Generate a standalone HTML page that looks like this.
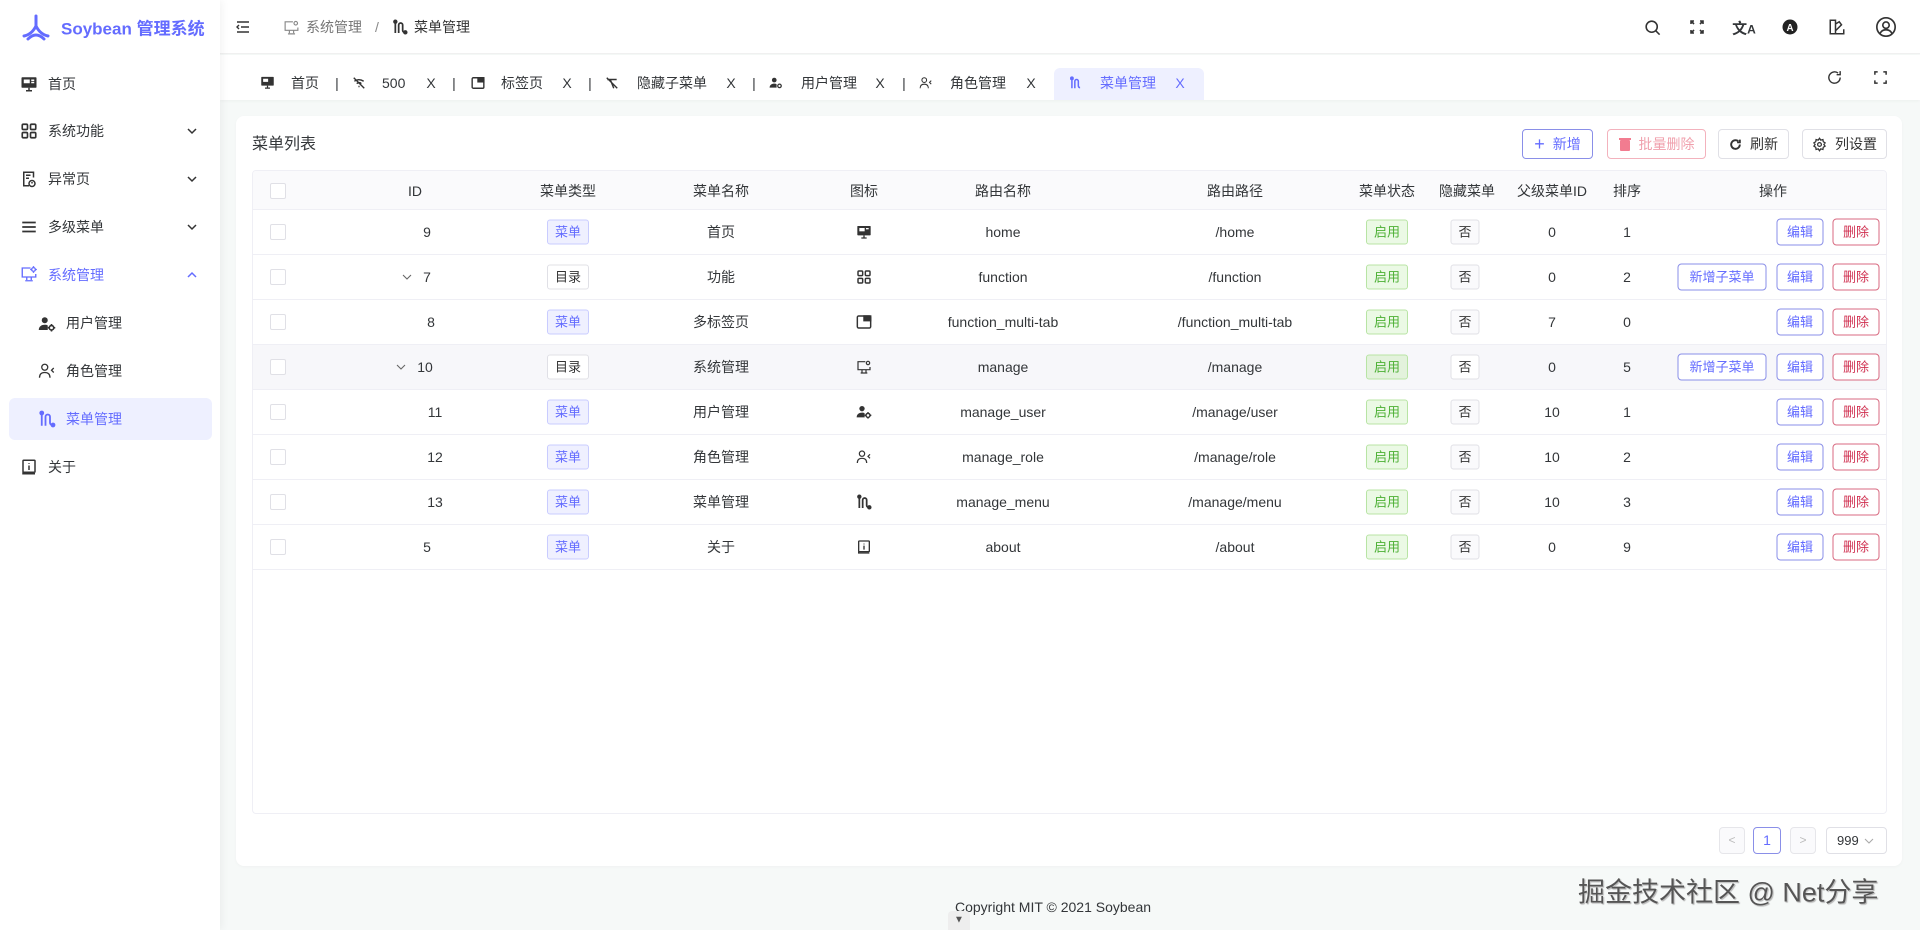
<!DOCTYPE html>
<html><head><meta charset="utf-8">
<style>
*{margin:0;padding:0;box-sizing:border-box}
body{width:1920px;height:930px;overflow:hidden;font-family:"Liberation Sans","Noto Sans CJK SC",sans-serif;font-size:14px;color:#333639;background:#f6f9f8;position:relative}
.abs{position:absolute}
.c{position:absolute;transform:translate(-50%,-50%);white-space:nowrap}
.cy{position:absolute;transform:translateY(-50%);white-space:nowrap}
svg{display:block}
#side{left:0;top:0;width:220px;height:930px;background:#fff;box-shadow:2px 0 8px rgba(0,0,0,.05);z-index:3}
#head{left:220px;top:0;width:1700px;height:54px;background:#fff;border-bottom:1px solid #f0f0f0}
#tabs{left:220px;top:55px;width:1700px;height:45px;background:#fff;box-shadow:0 1px 3px rgba(0,0,0,.04)}
.card{left:236px;top:116px;width:1666px;height:750px;background:#fff;border-radius:8px;box-shadow:0 1px 3px rgba(0,0,0,.03)}
.tbl{left:252px;top:170px;width:1635px;height:644px;border:1px solid #efeff5;border-radius:4px;overflow:hidden}
.hdr{left:0;top:0;width:100%;height:39px;background:#fafafc;border-bottom:1px solid #efeff5}
.row{left:0;width:100%;height:45px;border-bottom:1px solid #efeff5}
.cb{width:16px;height:16px;border:1px solid #e0e0e6;border-radius:2px;background:#fff}
.tag{height:25px;line-height:23px;padding:0 7px;border-radius:3px;font-size:13px;border:1px solid}
.tm{background:#eff0ff;border-color:#c9ccff;color:#646cff}
.td{background:#fff;border-color:#e0e0e6;color:#333}
.tg{background:#ebf9e5;border-color:#b8e4a4;color:#4cb034}
.tn{background:#fafafc;border-color:#e0e0e6;color:#333}
.btn{height:27px;line-height:25px;border:1px solid;border-radius:4px;font-size:13px;text-align:center;background:#fff}
.be{border-color:#8a8fe8;color:#646cff;width:47px}
.bd{border-color:#d86a80;color:#d03050;width:47px}
.ba{border-color:#8a8fe8;color:#646cff;width:89px}
.tb{height:30px;line-height:28px;border:1px solid;border-radius:4px;font-size:14px;display:flex;align-items:center;justify-content:center;gap:8px}
.mi{font-size:14px;color:#333639}
</style></head><body>

<div id="side" class="abs">
 <svg class="abs" style="left:22px;top:14px" width="28" height="28" viewBox="0 0 28 28"><path d="M14 2v10M14 12c-3 6-7 9-12 10M14 12c3 6 7 9 12 10M6 25c3-3 5-4 8-4s5 1 8 4" stroke="#646cff" stroke-width="3" fill="none" stroke-linecap="round"/></svg>
 <div class="cy" style="left:61px;top:27px;font-size:17px;font-weight:bold;color:#646cff">Soybean 管理系统</div>

 <svg class="abs" style="left:20px;top:75px" width="18" height="18" viewBox="0 0 24 24"><rect x="2" y="3" width="20" height="14" rx="1" fill="#333"/><rect x="5" y="6" width="8" height="5" fill="#fff"/><rect x="15" y="6" width="4" height="2" fill="#fff"/><rect x="15" y="9" width="4" height="2" fill="#fff"/><path d="M8 21h8M12 17v4" stroke="#333" stroke-width="2"/></svg>
 <div class="cy mi" style="left:48px;top:84px">首页</div>

 <svg class="abs" style="left:20px;top:122px" width="18" height="18" viewBox="0 0 24 24" fill="none" stroke="#333" stroke-width="2.2"><rect x="3" y="3" width="7" height="7" rx="1.5"/><rect x="14" y="3" width="7" height="7" rx="1.5"/><rect x="3" y="14" width="7" height="7" rx="1.5"/><rect x="14" y="14" width="7" height="7" rx="1.5"/></svg>
 <div class="cy mi" style="left:48px;top:131px">系统功能</div>
 <svg class="abs" style="left:186px;top:126px" width="12" height="10" viewBox="0 0 12 10"><path d="M2 3l4 4 4-4" stroke="#333" stroke-width="1.5" fill="none"/></svg>

 <svg class="abs" style="left:20px;top:170px" width="18" height="18" viewBox="0 0 24 24" fill="none" stroke="#333" stroke-width="2"><path d="M18 10V3H5v18h7"/><path d="M8 7h6M8 11h4"/><circle cx="16" cy="18" r="4"/><path d="M16 16v2"/></svg>
 <div class="cy mi" style="left:48px;top:179px">异常页</div>
 <svg class="abs" style="left:186px;top:174px" width="12" height="10" viewBox="0 0 12 10"><path d="M2 3l4 4 4-4" stroke="#333" stroke-width="1.5" fill="none"/></svg>

 <svg class="abs" style="left:20px;top:218px" width="18" height="18" viewBox="0 0 24 24" stroke="#333" stroke-width="2.4"><path d="M3 6h18M3 12h18M3 18h18"/></svg>
 <div class="cy mi" style="left:48px;top:227px">多级菜单</div>
 <svg class="abs" style="left:186px;top:222px" width="12" height="10" viewBox="0 0 12 10"><path d="M2 3l4 4 4-4" stroke="#333" stroke-width="1.5" fill="none"/></svg>

 <svg class="abs" style="left:20px;top:265px" width="18" height="18" viewBox="0 0 24 24" fill="none" stroke="#646cff" stroke-width="1.8"><path d="M14 4H3v12h18v-4"/><path d="M9 16v4M15 16v4M7 21h10"/><circle cx="18" cy="6" r="2.5"/><path d="M18 1.5v1.5M18 9v1.5M13.5 6h1.5M21 6h1.5"/></svg>
 <div class="cy mi" style="left:48px;top:275px;color:#646cff">系统管理</div>
 <svg class="abs" style="left:186px;top:270px" width="12" height="10" viewBox="0 0 12 10"><path d="M2 7l4-4 4 4" stroke="#646cff" stroke-width="1.5" fill="none"/></svg>

 <svg class="abs" style="left:38px;top:315px" width="18" height="18" viewBox="0 0 24 24"><circle cx="9" cy="7" r="4" fill="#333"/><path d="M1 20c0-5 4-7 8-7 2 0 3 .3 4 1v6z" fill="#333"/><circle cx="18" cy="17" r="3" fill="none" stroke="#333" stroke-width="2.2"/><path d="M18 12v2M18 20v2M13 17h2M21 17h2" stroke="#333" stroke-width="2"/></svg>
 <div class="cy mi" style="left:66px;top:323px">用户管理</div>

 <svg class="abs" style="left:38px;top:362px" width="18" height="18" viewBox="0 0 24 24" fill="none" stroke="#333" stroke-width="1.7"><circle cx="9" cy="7" r="4"/><path d="M2 21c0-5 3-7 7-7s7 2 7 7"/><path d="M21 8l-3 3 3 3"/></svg>
 <div class="cy mi" style="left:66px;top:371px">角色管理</div>

 <div class="abs" style="left:9px;top:398px;width:203px;height:42px;background:#eef0ff;border-radius:6px"></div>
 <svg class="abs" style="left:38px;top:410px" width="18" height="18" viewBox="0 0 24 24" fill="none" stroke="#646cff" stroke-width="2.4"><path d="M5 3v18"/><circle cx="5" cy="4" r="2" fill="#646cff"/><path d="M10 21V9a3 3 0 0 1 6 0v8a3 3 0 0 0 3 3"/><circle cx="20" cy="20" r="2" fill="#646cff"/></svg>
 <div class="cy mi" style="left:66px;top:419px;color:#646cff">菜单管理</div>

 <svg class="abs" style="left:20px;top:458px" width="18" height="18" viewBox="0 0 24 24" fill="none" stroke="#333" stroke-width="2"><rect x="4" y="3" width="16" height="16" rx="1"/><path d="M4 19v2h16"/><path d="M12 10v6M12 7v1"/></svg>
 <div class="cy mi" style="left:48px;top:467px">关于</div>
</div>

<div id="head" class="abs">
 <svg class="abs" style="left:15px;top:19px" width="16" height="16" viewBox="0 0 16 16" stroke="#333" stroke-width="1.4" fill="none"><path d="M2 3h12M6 8h8M2 13h12M4 6L2 8l2 2"/></svg>
 <svg class="abs" style="left:63px;top:19px" width="17" height="17" viewBox="0 0 24 24" fill="none" stroke="#888" stroke-width="1.6"><path d="M14 4H3v12h18v-4"/><path d="M9 16v4M15 16v4M7 21h10"/><circle cx="18" cy="6" r="2.5"/></svg>
 <div class="cy" style="left:86px;top:27px;color:#777">系统管理</div>
 <div class="cy" style="left:155px;top:27px;color:#888">/</div>
 <svg class="abs" style="left:172px;top:19px" width="16" height="16" viewBox="0 0 24 24" fill="none" stroke="#333" stroke-width="2.6"><path d="M5 3v18"/><circle cx="5" cy="4" r="2" fill="#333"/><path d="M10 21V9a3 3 0 0 1 6 0v8a3 3 0 0 0 3 3"/><circle cx="20" cy="20" r="2" fill="#333"/></svg>
 <div class="cy" style="left:194px;top:27px;color:#333">菜单管理</div>

 <svg class="abs" style="left:1423px;top:18px" width="19" height="19" viewBox="0 0 24 24" fill="none" stroke="#333" stroke-width="2"><circle cx="11" cy="11" r="7"/><path d="M16 16l5 5"/></svg>
 <svg class="abs" style="left:1469px;top:19px" width="16" height="16" viewBox="0 0 16 16" fill="none" stroke="#333" stroke-width="1.6"><path d="M2 5V2h3M11 2h3v3M14 11v3h-3M5 14H2v-3M2 2l3 3M14 2l-3 3M14 14l-3-3M2 14l3-3"/></svg>
 <div class="c" style="left:1524px;top:28px;font-size:15px;font-weight:bold">文<span style="font-size:12px">A</span></div>
 <svg class="abs" style="left:1561px;top:18px" width="18" height="18" viewBox="0 0 24 24"><circle cx="12" cy="12" r="10" fill="#222"/><text x="12" y="17" text-anchor="middle" font-size="13" font-weight="bold" fill="#fff" font-family="Liberation Sans">A</text></svg>
 <svg class="abs" style="left:1608px;top:18px" width="18" height="18" viewBox="0 0 24 24" fill="none" stroke="#333" stroke-width="2"><path d="M3 3h7v18H3zM10 8l5-3 3 4-8 8M10 21h11v-6"/></svg>
 <svg class="abs" style="left:1655px;top:16px" width="22" height="22" viewBox="0 0 24 24" fill="none" stroke="#333" stroke-width="1.8"><circle cx="12" cy="12" r="10"/><circle cx="12" cy="10" r="3.5"/><path d="M5.5 19c1.5-3 4-4 6.5-4s5 1 6.5 4"/></svg>
</div>

<div id="tabs" class="abs">
 <svg class="abs" style="left:40px;top:20px" width="15" height="15" viewBox="0 0 24 24"><rect x="2" y="3" width="20" height="14" rx="1" fill="#333"/><rect x="5" y="6" width="8" height="5" fill="#fff"/><path d="M8 21h8M12 17v4" stroke="#333" stroke-width="2"/></svg>
 <div class="cy" style="left:71px;top:28px">首页</div>
 <div class="c" style="left:117px;top:28px">|</div>
 <svg class="abs" style="left:132px;top:21px" width="14" height="14" viewBox="0 0 24 24" fill="none" stroke="#333" stroke-width="2.4"><path d="M3 3l18 18M4 9c4-3 10-4 16 0M8 13c3-2 6-2 8 0M11 18h2"/></svg>
 <div class="cy" style="left:162px;top:28px">500</div>
 <div class="c" style="left:211px;top:28px">X</div>
 <div class="c" style="left:234px;top:28px">|</div>
 <svg class="abs" style="left:251px;top:21px" width="14" height="14" viewBox="0 0 24 24" fill="none" stroke="#333" stroke-width="2.4"><rect x="2" y="3" width="20" height="18" rx="2"/><rect x="12" y="3" width="10" height="7" fill="#333"/></svg>
 <div class="cy" style="left:281px;top:28px">标签页</div>
 <div class="c" style="left:347px;top:28px">X</div>
 <div class="c" style="left:370px;top:28px">|</div>
 <svg class="abs" style="left:385px;top:21px" width="14" height="14" viewBox="0 0 24 24" fill="none" stroke="#333" stroke-width="2.4"><path d="M3 3l18 18M4 6h16M9 6l6 15"/></svg>
 <div class="cy" style="left:417px;top:28px">隐藏子菜单</div>
 <div class="c" style="left:511px;top:28px">X</div>
 <div class="c" style="left:534px;top:28px">|</div>
 <svg class="abs" style="left:549px;top:21px" width="14" height="14" viewBox="0 0 24 24"><circle cx="9" cy="7" r="4" fill="#333"/><path d="M1 20c0-5 4-7 8-7 2 0 3 .3 4 1v6z" fill="#333"/><circle cx="18" cy="17" r="3" fill="none" stroke="#333" stroke-width="2.2"/></svg>
 <div class="cy" style="left:581px;top:28px">用户管理</div>
 <div class="c" style="left:660px;top:28px">X</div>
 <div class="c" style="left:684px;top:28px">|</div>
 <svg class="abs" style="left:699px;top:21px" width="14" height="14" viewBox="0 0 24 24" fill="none" stroke="#333" stroke-width="1.8"><circle cx="9" cy="7" r="4"/><path d="M2 21c0-5 3-7 7-7s7 2 7 7M21 8l-3 3 3 3"/></svg>
 <div class="cy" style="left:730px;top:28px">角色管理</div>
 <div class="c" style="left:811px;top:28px">X</div>
 <div class="abs" style="left:834px;top:13px;width:150px;height:32px;background:#eef0ff;border-radius:6px 6px 0 0"></div>
 <svg class="abs" style="left:849px;top:21px" width="14" height="14" viewBox="0 0 24 24" fill="none" stroke="#646cff" stroke-width="2.6"><path d="M5 3v18"/><circle cx="5" cy="4" r="2" fill="#646cff"/><path d="M10 21V9a3 3 0 0 1 6 0v8a3 3 0 0 0 3 3"/></svg>
 <div class="cy" style="left:880px;top:28px;color:#646cff">菜单管理</div>
 <div class="c" style="left:960px;top:28px;color:#646cff">X</div>
 <svg class="abs" style="left:1606px;top:14px" width="17" height="17" viewBox="0 0 24 24" fill="none" stroke="#333" stroke-width="2"><path d="M20 12a8 8 0 1 1-3-6.2M20 3v5h-5"/></svg>
 <svg class="abs" style="left:1653px;top:15px" width="15" height="15" viewBox="0 0 16 16" fill="none" stroke="#333" stroke-width="1.6"><path d="M2 5V2h3M11 2h3v3M14 11v3h-3M5 14H2v-3"/></svg>
</div>

<div class="abs card"></div>
<div class="cy" style="left:252px;top:142px;font-size:16px">菜单列表</div>
<div class="abs tb" style="left:1522px;top:129px;width:71px;border-color:#8a8fe8;color:#646cff"><span style="font-size:18px;line-height:1">+</span>新增</div>
<div class="abs tb" style="left:1607px;top:129px;width:99px;border-color:#f3b2bd;color:#f0a0ad"><svg width="12" height="14" viewBox="0 0 12 14"><rect x="1" y="3" width="10" height="11" rx="1" fill="#f27c90"/><rect x="0" y="1" width="12" height="2" fill="#f27c90"/></svg>批量删除</div>
<div class="abs tb" style="left:1718px;top:129px;width:71px;border-color:#e0e0e6;color:#333"><svg width="13" height="13" viewBox="0 0 24 24" fill="none" stroke="#333" stroke-width="3.5"><path d="M20 12a8 8 0 1 1-3-6.2M20 3v5h-5"/></svg>刷新</div>
<div class="abs tb" style="left:1802px;top:129px;width:85px;border-color:#e0e0e6;color:#333"><svg width="15" height="15" viewBox="0 0 24 24" fill="none" stroke="#333" stroke-width="2"><circle cx="12" cy="12" r="3"/><path d="M12 2l2 3 3.5-1 .5 3.5 3 2-2 2.5 2 2.5-3 2-.5 3.5-3.5-1-2 3-2-3-3.5 1-.5-3.5-3-2 2-2.5-2-2.5 3-2 .5-3.5 3.5 1z"/></svg>列设置</div>

<div class="abs tbl">
 <div class="abs hdr">
  <div class="c cb" style="left:25px;top:20px"></div>
  <div class="c" style="left:162px;top:20px">ID</div>
  <div class="c" style="left:315px;top:20px">菜单类型</div>
  <div class="c" style="left:468px;top:20px">菜单名称</div>
  <div class="c" style="left:611px;top:20px">图标</div>
  <div class="c" style="left:750px;top:20px">路由名称</div>
  <div class="c" style="left:982px;top:20px">路由路径</div>
  <div class="c" style="left:1134px;top:20px">菜单状态</div>
  <div class="c" style="left:1214px;top:20px">隐藏菜单</div>
  <div class="c" style="left:1299px;top:20px">父级菜单ID</div>
  <div class="c" style="left:1374px;top:20px">排序</div>
  <div class="c" style="left:1520px;top:20px">操作</div>
 </div>

 <div class="abs row" style="top:39px">
  <div class="c cb" style="left:25px;top:22px"></div>
  <div class="c" style="left:174px;top:22px">9</div>
  <div class="c tag tm" style="left:315px;top:22px">菜单</div>
  <div class="c" style="left:468px;top:22px">首页</div>
  <svg class="c" style="left:611px;top:22px" width="16" height="16" viewBox="0 0 24 24"><rect x="2" y="3" width="20" height="14" rx="1" fill="#333"/><rect x="5" y="6" width="8" height="5" fill="#fff"/><rect x="15" y="6" width="4" height="2" fill="#fff"/><path d="M8 21h8M12 17v4" stroke="#333" stroke-width="2"/></svg>
  <div class="c" style="left:750px;top:22px">home</div>
  <div class="c" style="left:982px;top:22px">/home</div>
  <div class="c tag tg" style="left:1134px;top:22px">启用</div>
  <div class="c tag tn" style="left:1212px;top:22px">否</div>
  <div class="c" style="left:1299px;top:22px">0</div>
  <div class="c" style="left:1374px;top:22px">1</div>
  <div class="c btn be" style="left:1547px;top:22px">编辑</div>
  <div class="c btn bd" style="left:1603px;top:22px">删除</div>
 </div>
 <div class="abs row" style="top:84px">
  <div class="c cb" style="left:25px;top:22px"></div>
  <svg class="c" style="left:154px;top:22px" width="10" height="8" viewBox="0 0 10 8"><path d="M1 2l4 4 4-4" stroke="#666" stroke-width="1.1" fill="none"/></svg>
  <div class="c" style="left:174px;top:22px">7</div>
  <div class="c tag td" style="left:315px;top:22px">目录</div>
  <div class="c" style="left:468px;top:22px">功能</div>
  <svg class="c" style="left:611px;top:22px" width="16" height="16" viewBox="0 0 24 24" fill="none" stroke="#333" stroke-width="2.2"><rect x="3" y="3" width="7" height="7" rx="1.5"/><rect x="14" y="3" width="7" height="7" rx="1.5"/><rect x="3" y="14" width="7" height="7" rx="1.5"/><rect x="14" y="14" width="7" height="7" rx="1.5"/></svg>
  <div class="c" style="left:750px;top:22px">function</div>
  <div class="c" style="left:982px;top:22px">/function</div>
  <div class="c tag tg" style="left:1134px;top:22px">启用</div>
  <div class="c tag tn" style="left:1212px;top:22px">否</div>
  <div class="c" style="left:1299px;top:22px">0</div>
  <div class="c" style="left:1374px;top:22px">2</div>
  <div class="c btn ba" style="left:1469px;top:22px">新增子菜单</div>
  <div class="c btn be" style="left:1547px;top:22px">编辑</div>
  <div class="c btn bd" style="left:1603px;top:22px">删除</div>
 </div>
 <div class="abs row" style="top:129px">
  <div class="c cb" style="left:25px;top:22px"></div>
  <div class="c" style="left:178px;top:22px">8</div>
  <div class="c tag tm" style="left:315px;top:22px">菜单</div>
  <div class="c" style="left:468px;top:22px">多标签页</div>
  <svg class="c" style="left:611px;top:22px" width="16" height="16" viewBox="0 0 24 24" fill="none" stroke="#333" stroke-width="2.2"><rect x="2" y="3" width="20" height="18" rx="2"/><rect x="12" y="3" width="10" height="7" fill="#333"/></svg>
  <div class="c" style="left:750px;top:22px">function_multi-tab</div>
  <div class="c" style="left:982px;top:22px">/function_multi-tab</div>
  <div class="c tag tg" style="left:1134px;top:22px">启用</div>
  <div class="c tag tn" style="left:1212px;top:22px">否</div>
  <div class="c" style="left:1299px;top:22px">7</div>
  <div class="c" style="left:1374px;top:22px">0</div>
  <div class="c btn be" style="left:1547px;top:22px">编辑</div>
  <div class="c btn bd" style="left:1603px;top:22px">删除</div>
 </div>
 <div class="abs row" style="top:174px;background:#f7f7fa">
  <div class="c cb" style="left:25px;top:22px"></div>
  <svg class="c" style="left:148px;top:22px" width="10" height="8" viewBox="0 0 10 8"><path d="M1 2l4 4 4-4" stroke="#666" stroke-width="1.1" fill="none"/></svg>
  <div class="c" style="left:172px;top:22px">10</div>
  <div class="c tag td" style="left:315px;top:22px">目录</div>
  <div class="c" style="left:468px;top:22px">系统管理</div>
  <svg class="c" style="left:611px;top:22px" width="16" height="16" viewBox="0 0 24 24" fill="none" stroke="#333" stroke-width="1.8"><path d="M14 4H3v12h18v-4"/><path d="M9 16v4M15 16v4M7 21h10"/><circle cx="18" cy="6" r="2.5"/></svg>
  <div class="c" style="left:750px;top:22px">manage</div>
  <div class="c" style="left:982px;top:22px">/manage</div>
  <div class="c tag tg" style="left:1134px;top:22px;background:#e3f2dc">启用</div>
  <div class="c tag tn" style="left:1212px;top:22px;background:#fff">否</div>
  <div class="c" style="left:1299px;top:22px">0</div>
  <div class="c" style="left:1374px;top:22px">5</div>
  <div class="c btn ba" style="left:1469px;top:22px">新增子菜单</div>
  <div class="c btn be" style="left:1547px;top:22px">编辑</div>
  <div class="c btn bd" style="left:1603px;top:22px">删除</div>
 </div>
 <div class="abs row" style="top:219px">
  <div class="c cb" style="left:25px;top:22px"></div>
  <div class="c" style="left:182px;top:22px">11</div>
  <div class="c tag tm" style="left:315px;top:22px">菜单</div>
  <div class="c" style="left:468px;top:22px">用户管理</div>
  <svg class="c" style="left:611px;top:22px" width="16" height="16" viewBox="0 0 24 24"><circle cx="9" cy="7" r="4" fill="#333"/><path d="M1 20c0-5 4-7 8-7 2 0 3 .3 4 1v6z" fill="#333"/><circle cx="18" cy="17" r="3" fill="none" stroke="#333" stroke-width="2.2"/><path d="M18 12v2M18 20v2M13 17h2M21 17h2" stroke="#333" stroke-width="2"/></svg>
  <div class="c" style="left:750px;top:22px">manage_user</div>
  <div class="c" style="left:982px;top:22px">/manage/user</div>
  <div class="c tag tg" style="left:1134px;top:22px">启用</div>
  <div class="c tag tn" style="left:1212px;top:22px">否</div>
  <div class="c" style="left:1299px;top:22px">10</div>
  <div class="c" style="left:1374px;top:22px">1</div>
  <div class="c btn be" style="left:1547px;top:22px">编辑</div>
  <div class="c btn bd" style="left:1603px;top:22px">删除</div>
 </div>
 <div class="abs row" style="top:264px">
  <div class="c cb" style="left:25px;top:22px"></div>
  <div class="c" style="left:182px;top:22px">12</div>
  <div class="c tag tm" style="left:315px;top:22px">菜单</div>
  <div class="c" style="left:468px;top:22px">角色管理</div>
  <svg class="c" style="left:611px;top:22px" width="16" height="16" viewBox="0 0 24 24" fill="none" stroke="#333" stroke-width="1.8"><circle cx="9" cy="7" r="4"/><path d="M2 21c0-5 3-7 7-7s7 2 7 7M21 8l-3 3 3 3"/></svg>
  <div class="c" style="left:750px;top:22px">manage_role</div>
  <div class="c" style="left:982px;top:22px">/manage/role</div>
  <div class="c tag tg" style="left:1134px;top:22px">启用</div>
  <div class="c tag tn" style="left:1212px;top:22px">否</div>
  <div class="c" style="left:1299px;top:22px">10</div>
  <div class="c" style="left:1374px;top:22px">2</div>
  <div class="c btn be" style="left:1547px;top:22px">编辑</div>
  <div class="c btn bd" style="left:1603px;top:22px">删除</div>
 </div>
 <div class="abs row" style="top:309px">
  <div class="c cb" style="left:25px;top:22px"></div>
  <div class="c" style="left:182px;top:22px">13</div>
  <div class="c tag tm" style="left:315px;top:22px">菜单</div>
  <div class="c" style="left:468px;top:22px">菜单管理</div>
  <svg class="c" style="left:611px;top:22px" width="16" height="16" viewBox="0 0 24 24" fill="none" stroke="#333" stroke-width="2.6"><path d="M5 3v18"/><circle cx="5" cy="4" r="2" fill="#333"/><path d="M10 21V9a3 3 0 0 1 6 0v8a3 3 0 0 0 3 3"/><circle cx="20" cy="20" r="2" fill="#333"/></svg>
  <div class="c" style="left:750px;top:22px">manage_menu</div>
  <div class="c" style="left:982px;top:22px">/manage/menu</div>
  <div class="c tag tg" style="left:1134px;top:22px">启用</div>
  <div class="c tag tn" style="left:1212px;top:22px">否</div>
  <div class="c" style="left:1299px;top:22px">10</div>
  <div class="c" style="left:1374px;top:22px">3</div>
  <div class="c btn be" style="left:1547px;top:22px">编辑</div>
  <div class="c btn bd" style="left:1603px;top:22px">删除</div>
 </div>
 <div class="abs row" style="top:354px">
  <div class="c cb" style="left:25px;top:22px"></div>
  <div class="c" style="left:174px;top:22px">5</div>
  <div class="c tag tm" style="left:315px;top:22px">菜单</div>
  <div class="c" style="left:468px;top:22px">关于</div>
  <svg class="c" style="left:611px;top:22px" width="16" height="16" viewBox="0 0 24 24" fill="none" stroke="#333" stroke-width="2"><rect x="4" y="3" width="16" height="16" rx="1"/><path d="M4 19v2h16M12 10v6M12 7v1"/></svg>
  <div class="c" style="left:750px;top:22px">about</div>
  <div class="c" style="left:982px;top:22px">/about</div>
  <div class="c tag tg" style="left:1134px;top:22px">启用</div>
  <div class="c tag tn" style="left:1212px;top:22px">否</div>
  <div class="c" style="left:1299px;top:22px">0</div>
  <div class="c" style="left:1374px;top:22px">9</div>
  <div class="c btn be" style="left:1547px;top:22px">编辑</div>
  <div class="c btn bd" style="left:1603px;top:22px">删除</div>
 </div>
</div>

<div class="abs" style="left:1719px;top:827px;width:26px;height:27px;border:1px solid #e6e6ea;border-radius:4px;background:#fafafc;color:#bbb;text-align:center;line-height:25px;font-size:12px">&lt;</div>
<div class="abs" style="left:1753px;top:827px;width:28px;height:27px;border:1px solid #8a8fe8;border-radius:4px;color:#646cff;text-align:center;line-height:25px">1</div>
<div class="abs" style="left:1790px;top:827px;width:26px;height:27px;border:1px solid #e6e6ea;border-radius:4px;background:#fafafc;color:#bbb;text-align:center;line-height:25px;font-size:12px">&gt;</div>
<div class="abs" style="left:1826px;top:827px;width:61px;height:27px;border:1px solid #e0e0e6;border-radius:4px;line-height:25px;padding-left:10px;font-size:13px">999</div>
<svg class="abs" style="left:1864px;top:837px" width="10" height="8" viewBox="0 0 10 8"><path d="M1 2l4 4 4-4" stroke="#aaa" stroke-width="1.1" fill="none"/></svg>

<div class="c" style="left:1053px;top:907px;font-size:14px">Copyright MIT © 2021 Soybean</div>
<div class="abs" style="left:948px;top:911px;width:22px;height:19px;background:#eee;border-radius:4px 4px 0 0"></div>
<div class="c" style="left:959px;top:920px;font-size:10px;color:#555">▼</div>
<div class="cy" style="left:1578px;top:890px;font-size:27px;color:#555;text-shadow:0 0 2px #fff,1px 1px 1px #999">掘金技术社区 @ Net分享</div>
</body></html>
